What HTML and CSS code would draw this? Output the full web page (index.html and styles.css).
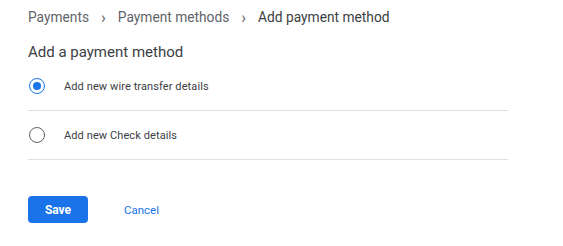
FILE: index.html
```html
<!DOCTYPE html>
<html>
<head>
<meta charset="utf-8">
<link rel="stylesheet" href="styles.css">
</head>
<body>
<div class="page">
  <nav class="crumbs">
    <span class="crumb">Payments</span>
    <span class="sep">&#8250;</span>
    <span class="crumb">Payment methods</span>
    <span class="sep">&#8250;</span>
    <span class="crumb current">Add payment method</span>
  </nav>
  <h1 class="title">Add a payment method</h1>
  <div class="options">
    <label class="option">
      <span class="radio checked"><span class="dot"></span></span>
      <span class="label">Add new wire transfer details</span>
    </label>
    <label class="option">
      <span class="radio"></span>
      <span class="label">Add new Check details</span>
    </label>
  </div>
  <div class="actions">
    <button class="btn-save">Save</button>
    <button class="btn-cancel">Cancel</button>
  </div>
</div>
</body>
</html>
```

FILE: styles.css
```css
html, body {
  margin: 0;
  padding: 0;
  background: #ffffff;
}
body {
  font-family: Roboto, "Liberation Sans", Arial, sans-serif;
}
.page {
  padding: 7px 0 0 28px;
  width: 480px;
}
.crumbs {
  display: flex;
  align-items: center;
  height: 20px;
  font-size: 13.75px;
  color: #5f6368;
}
.sep {
  font-size: 16px;
  margin: 0 12px;
  color: #5f6368;
}
.crumb.current {
  color: #3c4043;
}
.title {
  margin: 15px 0 0 0;
  font-size: 15px;
  font-weight: 400;
  color: #3c4043;
  line-height: 20px;
}
.options {
  margin-top: 0;
}
.option {
  display: flex;
  align-items: center;
  height: 48px;
  border-bottom: 1px solid #e0e0e0;
}
.radio {
  box-sizing: border-box;
  width: 16px;
  height: 16px;
  border-radius: 50%;
  border: 1.5px solid #5f6368;
  display: flex;
  align-items: center;
  justify-content: center;
  margin-left: 1px;
  flex: none;
}
.radio.checked {
  border-color: #1a73e8;
}
.dot {
  width: 8px;
  height: 8px;
  border-radius: 50%;
  background: #1a73e8;
}
.label {
  margin-left: 19px;
  font-size: 11px;
  color: #3c4043;
  letter-spacing: 0.1px;
}
.actions {
  display: flex;
  align-items: center;
  margin-top: 36px;
}
.btn-save {
  width: 60px;
  height: 27px;
  border: none;
  border-radius: 4px;
  background: #1a73e8;
  color: #fff;
  font-family: inherit;
  font-size: 12px;
  font-weight: 700;
  padding: 0;
}
.btn-cancel {
  margin-left: 36px;
  border: none;
  background: none;
  padding: 0;
  color: #1a73e8;
  font-family: inherit;
  font-size: 11.5px;
  font-weight: 400;
}
```
